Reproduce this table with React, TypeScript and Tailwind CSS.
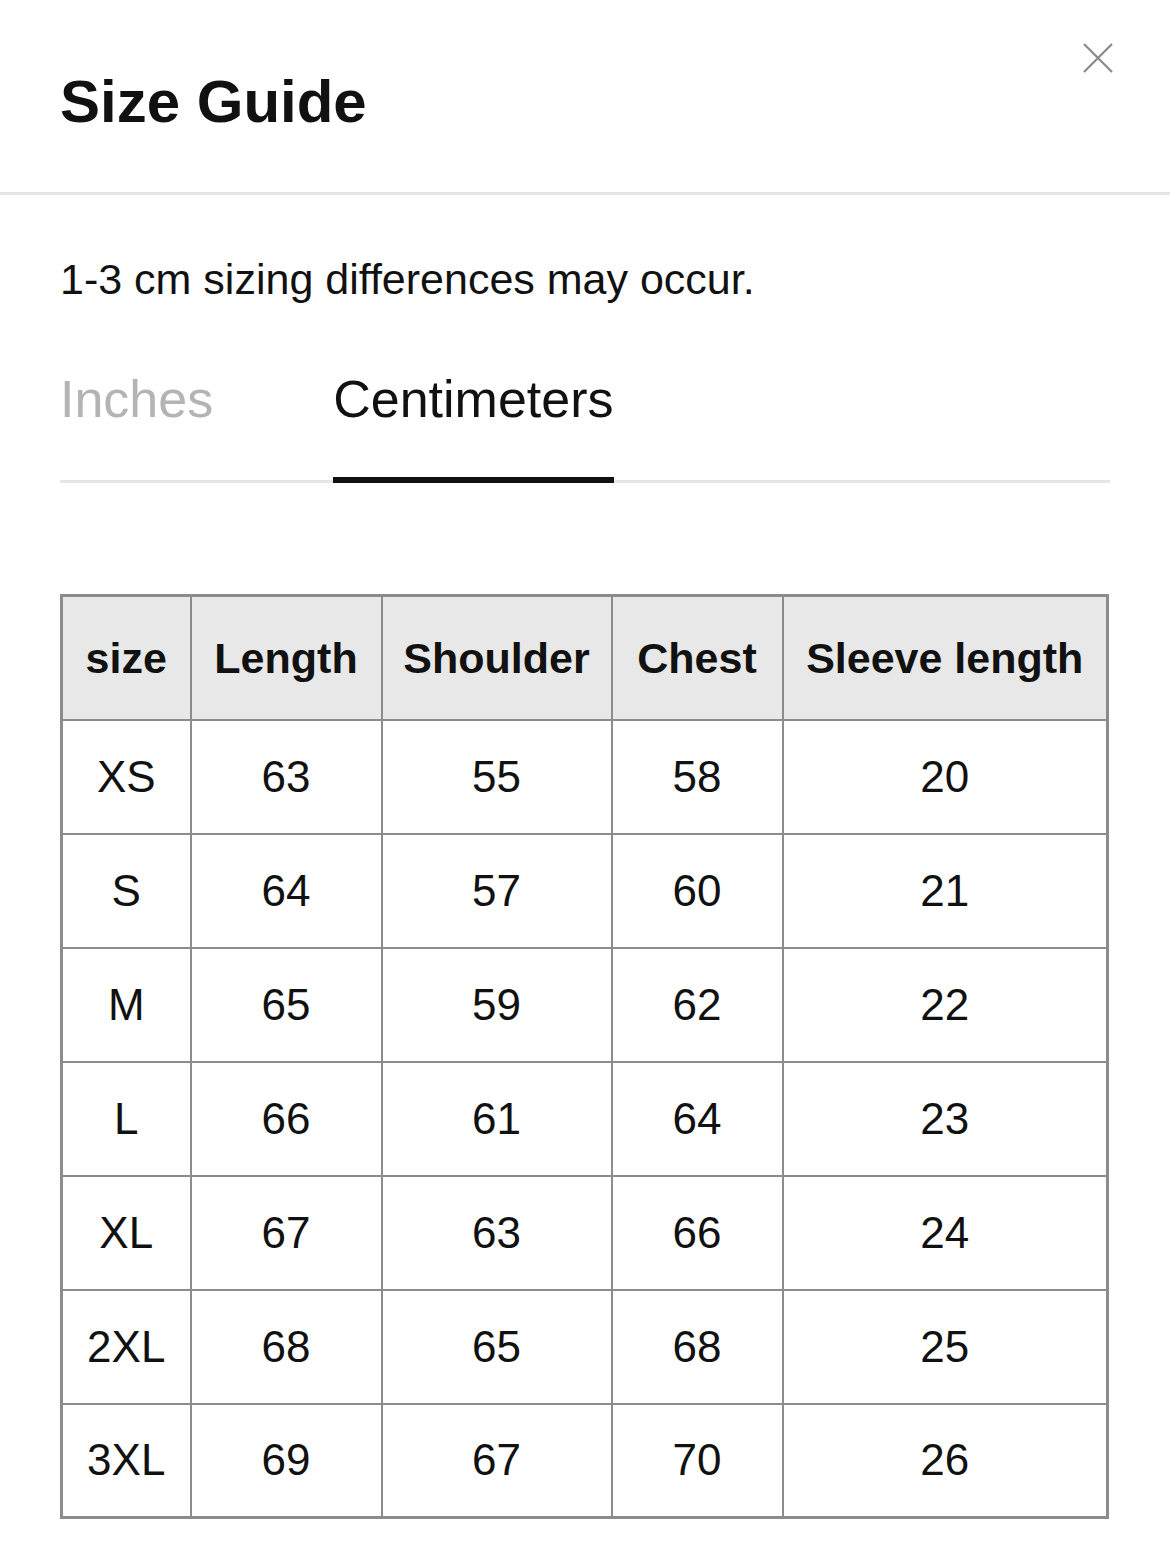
import { useState } from 'react';

// Size guide sheet: header with close button, unit tabs and a bordered measurement table.

type Unit = 'in' | 'cm';

const COLUMNS = ['size', 'Length', 'Shoulder', 'Chest', 'Sleeve length'];
const COL_WIDTHS = ['w-[129px]', 'w-[191px]', 'w-[230px]', 'w-[171px]', 'w-[325px]'];

// values in centimeters
const ROWS: [string, number, number, number, number][] = [
  ['XS', 63, 55, 58, 20],
  ['S', 64, 57, 60, 21],
  ['M', 65, 59, 62, 22],
  ['L', 66, 61, 64, 23],
  ['XL', 67, 63, 66, 24],
  ['2XL', 68, 65, 68, 25],
  ['3XL', 69, 67, 70, 26],
];

function fmt(v: number, unit: Unit): string {
  if (unit === 'cm') return String(v);
  return (v / 2.54).toFixed(1);
}

function CloseIcon() {
  return (
    <svg width="32" height="32" viewBox="0 0 32 32" fill="none" stroke="#8a8a8a" strokeWidth="2.2">
      <path d="M2 2 L30 30 M30 2 L2 30" />
    </svg>
  );
}

export default function App() {
  const [unit, setUnit] = useState<Unit>('cm');

  const tab = (u: Unit, label: string) => (
    <button
      type="button"
      onClick={() => setUnit(u)}
      className={`-mb-[3px] border-b-[6px] pb-[52px] text-[52px] leading-none ${
        unit === u ? 'border-[#111111] text-[#111111]' : 'border-transparent text-[#b4b4b4]'
      }`}
    >
      {label}
    </button>
  );

  return (
    <div className="min-h-[1566px] w-[1170px] bg-white font-['Liberation_Sans',Arial,sans-serif] text-[#111111]">
      <header className="flex h-[195px] items-start justify-between border-b-[3px] border-[#e6e6e6] pl-[60px] pr-[56px]">
        <h1 className="mt-[72px] text-[60px] font-bold leading-none">Size Guide</h1>
        <button type="button" aria-label="Close" className="mt-[42px]">
          <CloseIcon />
        </button>
      </header>

      <div className="px-[60px]">
        <p className="mt-[63px] text-[43px] leading-none">1-3 cm sizing differences may occur.</p>

        <div className="mt-[72px] flex gap-[120px] border-b-[3px] border-[#e6e6e6]">
          {tab('in', 'Inches')}
          {tab('cm', 'Centimeters')}
        </div>

        <table className="mt-[111px] table-fixed border-collapse border-[3px] border-[#8c8c8c] text-center">
          <colgroup>
            {COL_WIDTHS.map((w) => (
              <col key={w} className={w} />
            ))}
          </colgroup>
          <thead>
            <tr className="h-[124px] bg-[#e8e8e8]">
              {COLUMNS.map((c) => (
                <th key={c} className="border-2 border-[#8c8c8c] p-0 text-[43px] font-bold">
                  {c}
                </th>
              ))}
            </tr>
          </thead>
          <tbody>
            {ROWS.map(([size, ...vals]) => (
              <tr key={size} className="h-[114px]">
                <td className="border-2 border-[#8c8c8c] p-0 text-[44px]">{size}</td>
                {vals.map((v, i) => (
                  <td key={i} className="border-2 border-[#8c8c8c] p-0 text-[44px]">
                    {fmt(v, unit)}
                  </td>
                ))}
              </tr>
            ))}
          </tbody>
        </table>
      </div>
    </div>
  );
}
